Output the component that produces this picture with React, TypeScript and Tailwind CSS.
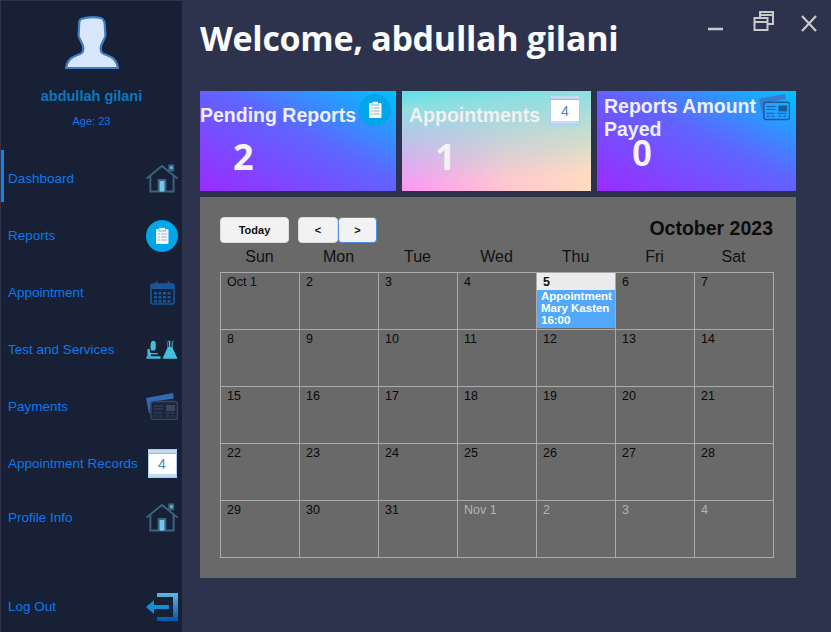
import type { ReactNode } from "react";

function HouseIcon() {
  return (
    <svg width="33" height="29" viewBox="0 0 33 29" fill="none">
      <path d="M0.500 14.500 16.500 1.500l16 13" stroke="#3a6380" strokeWidth="2" />
      <path d="M4.500 12v16h24V12" stroke="#3a6380" strokeWidth="2" />
      <rect x="23" y="0" width="6" height="7" fill="#3a6380" />
      <rect x="25" y="2" width="2.500" height="2.500" fill="#74c6ea" />
      <rect x="12" y="15" width="9" height="13" fill="#3a6380" />
      <rect x="14" y="17" width="5" height="11" fill="#74c6ea" />
    </svg>
  );
}

function ClipboardBadge({ size }: { size: number }) {
  return (
    <svg width={size} height={size} viewBox="0 0 32 32">
      <circle cx="16" cy="16" r="16" fill="#00a6e8" />
      <rect x="10" y="9" width="12.500" height="15" rx="1" fill="#f1f6fa" />
      <rect x="13" y="7.500" width="6.500" height="3.500" fill="#f1f6fa" stroke="#00a6e8" strokeWidth="0.600" />
      <path d="M12 14h2M15 14h5.500M12 17h2M15 17h5.500M12 20h2M15 20h5.500" stroke="#9fb2c2" strokeWidth="1" />
    </svg>
  );
}

function CalendarIcon() {
  return (
    <svg width="25" height="24" viewBox="0 0 25 24">
      <rect x="1" y="3" width="23" height="20" rx="2" fill="none" stroke="#17569b" strokeWidth="1.600" />
      <rect x="1" y="3" width="23" height="5" fill="#17569b" />
      <rect x="5.500" y="0.500" width="2" height="5" fill="#17569b" />
      <rect x="17.500" y="0.500" width="2" height="5" fill="#17569b" />
      {[11, 15, 19].map((y) =>
        [4, 8.500, 13, 17.500].map((x) => (
          <rect key={`${x}-${y}`} x={x} y={y} width="3" height="2.600" fill="#17569b" />
        )),
      )}
    </svg>
  );
}

function LabIcon() {
  return (
    <svg width="33" height="20" viewBox="0 0 33 20" fill="#44bfdc">
      <path d="M0.500 16.500h14.500v2.500H0.500z" />
      <path d="M5 3a2.500 2.500 0 0 1 4-2l1 1v7l-1 1.500H5.500L4.500 8z" />
      <path d="M1.500 9h2.500v3l1 1h7v1.500H5v2H1.500z" />
      <path d="M20.500 0 22.500 2v5h1V2l-.7-1.500h2.400L25 2v5h1.500V2L28.500 0v1l-1 1v6l5 11h-15.500l5-11V2l-1-1z" />
    </svg>
  );
}

function CardsIcon({
  w,
  h,
  back,
  front,
  fill,
}: {
  w: number;
  h: number;
  back: string;
  front: string;
  fill: string;
}) {
  return (
    <svg width={w} height={h} viewBox="0 0 32 27" fill="none">
      <path d="M0 5 27 0l.800 5.500L5 9l-1 11H3z" fill={back} />
      <rect x="5" y="8.500" width="26.500" height="18" rx="2.500" fill={fill} stroke={front} strokeWidth="1.500" />
      <rect x="20" y="12" width="9" height="6" fill={front} />
      <path d="M8 13h9M8 16h9M8 20h8M19 20h9M8 23h3M13 23h3M20 23h3M25 23h3" stroke={front} strokeWidth="1" />
    </svg>
  );
}

function DateIcon({ size }: { size: number }) {
  return (
    <div
      className="flex flex-col bg-white border border-[#a9cdf0]"
      style={{ width: size, height: size }}
    >
      <div className="h-[4px] bg-[#c3dcf5] border-b border-[#8dbbe8] shrink-0" />
      <div className="flex-1 flex items-center justify-center text-[14px] leading-none text-[#4a86c0] font-['Liberation_Sans',sans-serif]">
        4
      </div>
      <div className="h-[3px] bg-[#c3dcf5] shrink-0" />
    </div>
  );
}

function LogoutIcon() {
  return (
    <svg width="32" height="28" viewBox="0 0 32 28">
      <defs>
        <linearGradient id="logoutDoor" x1="0" y1="0" x2="0" y2="1">
          <stop offset="0" stopColor="#5fb6e4" />
          <stop offset="1" stopColor="#0058a8" />
        </linearGradient>
      </defs>
      <path d="M11 0h21v28H11v-4h16V4H11z" fill="url(#logoutDoor)" />
      <path d="M0 14 8 7v5h15v4H8v5z" fill="#0f8fd8" />
    </svg>
  );
}

function PersonIcon() {
  return (
    <svg width="54" height="54" viewBox="0 0 54 54">
      <path
        d="M16 3c6-2 15-2 20-1 3 1 4 5 4 10 0 4 1 7 0 9-1 3-3 6-4 9-1 5 0 7 3 8 5 2 12 3 14 14H1c2-11 9-12 14-14 3-1 4-3 3-8-1-3-3-6-4-9-1-2 0-5 0-9 0-5 0-8 2-9z"
        fill="#d9e7fc"
        stroke="#3f7cc4"
        strokeWidth="2.200"
      />
    </svg>
  );
}

const navItems: { label: string; icon: ReactNode; h: string }[] = [
  { label: "Dashboard", icon: <HouseIcon />, h: "h-[57px]" },
  { label: "Reports", icon: <ClipboardBadge size={32} />, h: "h-[57px]" },
  { label: "Appointment", icon: <CalendarIcon />, h: "h-[57px]" },
  { label: "Test and Services", icon: <LabIcon />, h: "h-[57px]" },
  {
    label: "Payments",
    icon: <CardsIcon w={32} h={27} back="#2f6cb5" front="#3a4658" fill="#1b2740" />,
    h: "h-[57px]",
  },
  { label: "Appointment Records", icon: <DateIcon size={29} />, h: "h-[57px]" },
  { label: "Profile Info", icon: <HouseIcon />, h: "h-[51px]" },
];

const days = ["Sun", "Mon", "Tue", "Wed", "Thu", "Fri", "Sat"];

const cells: { label: string; muted?: boolean }[] = [
  { label: "Oct 1" },
  ...Array.from({ length: 30 }, (_, i) => ({ label: String(i + 2) })),
  { label: "Nov 1", muted: true },
  { label: "2", muted: true },
  { label: "3", muted: true },
  { label: "4", muted: true },
];

function StatCard({
  className,
  children,
}: {
  className: string;
  children: ReactNode;
}) {
  return <div className={`relative h-[100px] ${className}`}>{children}</div>;
}

export default function App() {
  return (
    <div className="w-[831px] h-[632px] flex bg-[#2e334d] pl-px pt-px overflow-hidden font-['Liberation_Sans',sans-serif]">
      <aside className="w-[181px] shrink-0 bg-[#182036] flex flex-col">
        <div className="flex justify-center pt-[15px]">
          <PersonIcon />
        </div>
        <div className="mt-[18px] text-center text-[14.500px] leading-[16px] font-bold text-[#0d76bd]">
          abdullah gilani
        </div>
        <div className="mt-[10px] text-center text-[11px] leading-[14px] text-[#0a78ee]">
          Age: 23
        </div>
        <nav className="mt-[22px]">
          {navItems.map((item, i) => (
            <div
              key={item.label}
              className={`relative flex items-center justify-between pl-[7px] pr-[4px] ${item.h} ${
                i === 0 ? "before:absolute before:left-0 before:top-0 before:w-[3px] before:h-[52px] before:bg-[#0a86f0]" : ""
              }`}
            >
              <span className="text-[13.500px] leading-[16px] text-[#0a78ee] whitespace-nowrap">
                {item.label}
              </span>
              <span className="w-[32px] flex justify-center">{item.icon}</span>
            </div>
          ))}
        </nav>
        <div className="mt-auto mb-[11px] flex items-center justify-between pl-[7px] pr-[4px]">
          <span className="text-[13.500px] leading-[16px] text-[#0a78ee]">Log Out</span>
          <LogoutIcon />
        </div>
      </aside>

      <main className="flex-1 pl-[18px] pr-[34px]">
        <header className="relative h-[90px]">
          <h1 className="pt-[15px] text-[34px] leading-[45px] font-bold text-[#fbfbfb] font-['Open_Sans',sans-serif] tracking-[-0.300px] whitespace-nowrap">
            Welcome, abdullah gilani
          </h1>
          <div className="absolute right-[-34px] top-0 w-[130px] h-[34px]">
            <svg width="130" height="34" viewBox="0 0 130 34" fill="none" stroke="#c9c9c9" strokeWidth="2">
              <path d="M7 28h15" strokeWidth="2.500" />
              <rect x="53.500" y="17" width="13" height="12" />
              <path d="M53 21h14" />
              <path d="M59 17v-6h13v12h-5" />
              <path d="M59 14h13" />
              <path d="M101 15l14 15M115 15l-14 15" strokeWidth="2.200" />
            </svg>
          </div>
        </header>

        <div className="flex gap-[6px]">
          <StatCard className="w-[196px] bg-[linear-gradient(to_top_right,#9b2bff,#5f65ff_55%,#00c2ff)]">
            <div className="pt-[12px] text-[19.500px] leading-[24px] font-bold text-[#eef0ff]">
              Pending Reports
            </div>
            <div className="absolute right-[5px] top-[3px]">
              <ClipboardBadge size={32} />
            </div>
            <div className="absolute left-[33px] top-[46px] text-[36px] leading-[40px] font-bold text-[#f6f6f6] font-['Open_Sans',sans-serif]">
              2
            </div>
          </StatCard>
          <StatCard className="w-[189px] bg-[linear-gradient(175deg,#5fdfe9_0%,#8fdfe0_15%,transparent_85%),linear-gradient(90deg,#ff96f5,#ffc8d0_55%,#ffdcc0)]">
            <div className="pl-[7px] pt-[12px] text-[19.500px] leading-[24px] font-bold text-[#f0f1f1]">
              Appointments
            </div>
            <div className="absolute right-[11px] top-[4px]">
              <DateIcon size={30} />
            </div>
            <div className="absolute left-[33px] top-[46px] text-[36px] leading-[40px] font-bold text-[#f3f3f3] font-['Open_Sans',sans-serif]">
              1
            </div>
          </StatCard>
          <StatCard className="w-[199px] bg-[linear-gradient(to_top_right,#9b2bff,#5f65ff_55%,#00c2ff)]">
            <div className="pl-[7px] pt-[4px] pr-[30px] text-[19.500px] leading-[23px] font-bold text-[#eef0ff]">
              Reports Amount Payed
            </div>
            <div className="absolute right-[6px] top-[2px]">
              <CardsIcon w={31} h={28} back="#3a7ad0" front="#1c5a9c" fill="none" />
            </div>
            <div className="absolute left-[35px] top-[50px] text-[36px] leading-[26px] font-bold text-[#f4f4f4] font-['Liberation_Sans',sans-serif]">
              0
            </div>
          </StatCard>
        </div>

        <section className="mt-[6px] w-[596px] h-[381px] bg-[#696969] px-[20px] pt-[20px]">
          <div className="flex items-start justify-between h-[26px] pr-[3px]">
            <div className="flex">
              <button className="w-[69px] h-[26px] rounded-[4px] bg-[#f2f2f2] border border-[#dcdcdc] text-[11px] font-bold text-[#111]">
                Today
              </button>
              <button className="ml-[9px] w-[40px] h-[26px] rounded-[4px] bg-[#f2f2f2] border border-[#dcdcdc] text-[11px] font-bold text-[#111]">
                &lt;
              </button>
              <button className="w-[39px] h-[26px] rounded-[4px] bg-[#f2f2f2] border border-[#4f8dea] text-[11px] font-bold text-[#111]">
                &gt;
              </button>
            </div>
            <div className="text-[19.500px] leading-[24px] mt-[-1px] font-bold text-[#0d0d0d]">
              October 2023
            </div>
          </div>
          <div className="grid grid-cols-[repeat(7,79px)] w-[554px] mt-[1px]">
            {days.map((d) => (
              <div key={d} className="text-center text-[16px] leading-[26px] text-[#111]">
                {d}
              </div>
            ))}
          </div>
          <div className="grid grid-cols-[repeat(7,79px)] grid-rows-[repeat(5,57px)] w-[554px] mt-[2px] border-l border-t border-[#ababab]">
            {cells.map((cell) =>
              cell.label === "5" ? (
                <div key={cell.label} className="flex flex-col border-r border-b border-[#ababab]">
                  <div className="h-[17px] bg-[#ececec] pl-[6px] text-[12.500px] leading-[18px] font-bold text-[#111]">
                    5
                  </div>
                  <div className="h-[38px] bg-[#52a9fb] pl-[4px] text-[11.500px] leading-[12px] font-bold text-white whitespace-nowrap overflow-hidden">
                    <div>Appointment</div>
                    <div>Mary Kasten</div>
                    <div>16:00</div>
                  </div>
                </div>
              ) : (
                <div
                  key={cell.label}
                  className={`border-r border-b border-[#ababab] pl-[6px] pt-px text-[12.500px] leading-[16px] ${
                    cell.muted ? "text-[#b3b3b3]" : "text-[#0a0a0a]"
                  }`}
                >
                  {cell.label}
                </div>
              ),
            )}
          </div>
        </section>
      </main>
    </div>
  );
}
